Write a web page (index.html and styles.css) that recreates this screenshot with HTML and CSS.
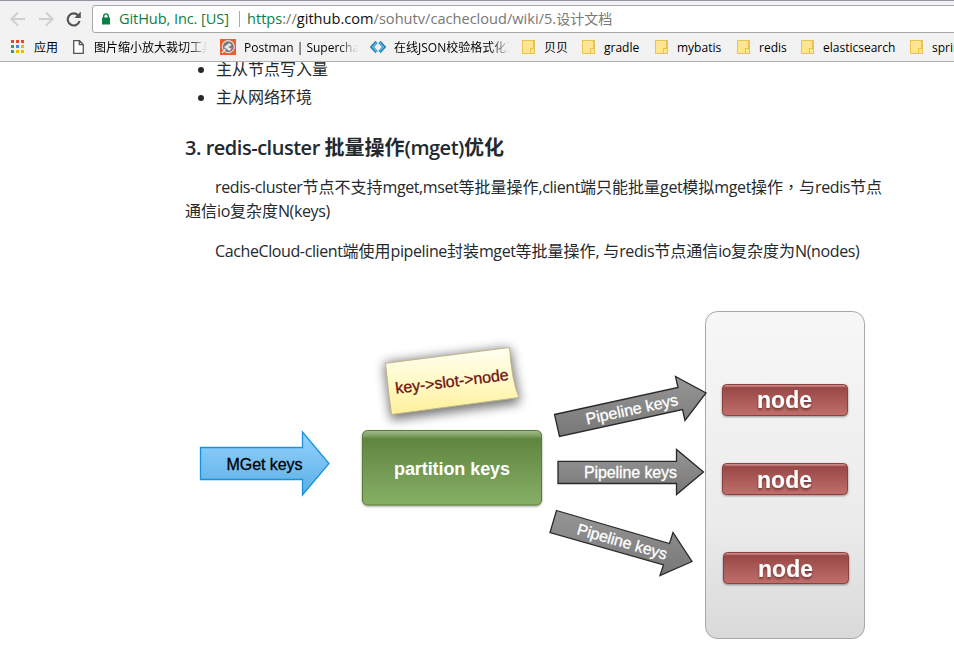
FILE: index.html
```html
<!DOCTYPE html>
<html lang="zh-CN">
<head>
<meta charset="utf-8">
<title>5.设计文档</title>
<link rel="stylesheet" href="styles.css">
</head>
<body>
<header class="chrome">
  <div class="toolbar">
    <svg class="nav" width="82" height="26" viewBox="0 0 82 26" fill="none">
      <g stroke="#cfcfcf" stroke-width="2"><path d="M25 13H12M18 6.5 11.5 13l6.500 6.500"/><path d="M39 13H52M46 6.500 52.500 13 46 19.500"/></g>
      <path d="M78.200 9.500A6 6 0 1 0 79.500 15" stroke="#555" stroke-width="2.200"/><path d="M80.800 5.500v6.500h-6.500z" fill="#555"/>
    </svg>
    <div class="address">
      <svg width="8" height="12" viewBox="0 0 8 12"><rect y="4.500" width="8" height="7" rx=".5" fill="#0b8043"/><path d="M1.700 5V3.200a2.300 2.300 0 0 1 4.600 0V5" fill="none" stroke="#0b8043" stroke-width="1.400"/></svg>
      <span class="owner">GitHub, Inc. [US]</span>
      <span class="url"><span class="scheme">https</span><span class="dim">://</span>github.com<span class="dim">/sohutv/cachecloud/wiki/5.</span><span class="dim cjk">设计文档</span></span>
    </div>
  </div>
  <nav class="bookmarks">
    <a><svg width="14" height="14" viewBox="0 0 14 14"><path fill="#ea4335" d="M0 0h3v3H0zM5 0h3v3H5zM10 0h3v3h-3z"/><path fill="#34a05f" d="M0 5h3v3H0zM0 10h3v3H0z"/><path fill="#4285f4" d="M5 5h3v3H5z"/><path fill="#fbb30c" d="M10 5h3v3h-3zM5 10h3v3H5zM10 10h3v3h-3z"/></svg><span>应用</span></a>
    <a class="page"><svg width="11" height="14" viewBox="0 0 11 14"><path d="M.7.700h5.800l3.800 3.800v8.800H.7zM6.300.700v4h4" fill="#fff" stroke="#555" stroke-width="1.300"/></svg><span class="fade">图片缩小放大裁切工具</span></a>
    <a class="postman"><svg width="16" height="16" viewBox="0 0 16 16"><path fill="#f15a29" d="M0 0h16v16H0z"/><circle cx="8.300" cy="7.700" r="6" fill="#777" stroke="#ddd" stroke-width="1.200"/><path d="M4 8 9.500 4l2 2.500L8 8l3.500 1.500-2 2.500z" fill="#e8e8e8"/><path d="m2 14 3.500-4" stroke="#eee" stroke-width="1.300"/></svg><span class="fade">Postman | Supercharge</span></a>
    <a class="json"><svg width="16" height="12" viewBox="0 0 16 12" fill="none" stroke-width="3.200"><g stroke="#1879b5"><path d="M6.500 1 2 6l4.500 5M9.500 1 14 6l-4.500 5"/></g><g stroke="#60b9e8" stroke-width="1.400"><path d="M6.500 1.500 2.500 6l4 4.500M9.500 1.500l4 4.500-4 4.500"/></g></svg><span class="fade">在线JSON校验格式化工具</span></a>
    <a class="folder"><i></i><span>贝贝</span></a>
    <a class="folder"><i></i><span>gradle</span></a>
    <a class="folder"><i></i><span>mybatis</span></a>
    <a class="folder"><i></i><span>redis</span></a>
    <a class="folder"><i></i><span>elasticsearch</span></a>
    <a class="folder"><i></i><span>spring</span></a>
  </nav>
</header>
<main>
  <article>
    <ul><li>主从节点写入量</li><li>主从网络环境</li></ul>
    <h3><b>3. redis-cluster </b>批量操作<b>(mget)</b>优化</h3>
    <p><b>redis-cluster</b>节点不支持<b>mget,mset</b>等批量操作<b>,client</b>端只能批量<b>get</b>模拟<b>mget</b>操作<span lang="zh-TW" class="comma">，</span>与<b>redis</b>节点<br>通信<b>io</b>复杂度<b>N(keys)</b></p>
    <p><b>CacheCloud-client</b>端使用<b>pipeline</b>封装<b>mget</b>等批量操作<b>, </b>与<b>redis</b>节点通信<b>io</b>复杂度为<b>N(nodes)</b></p>
    <svg class="diagram" width="700" height="370" viewBox="185 279 700 370">
      <defs>
        <linearGradient id="blue" x2="0" y2="1"><stop stop-color="#94d3ff"/><stop offset="1" stop-color="#5baee4"/></linearGradient>
        <linearGradient id="green" x2="0" y2="1"><stop stop-color="#a5bf91"/><stop offset=".09" stop-color="#729653"/><stop offset=".11" stop-color="#5f853f"/><stop offset="1" stop-color="#87b067"/></linearGradient>
        <linearGradient id="yellow" x2="0" y2="1"><stop stop-color="#fffff1"/><stop offset=".4" stop-color="#fffbd0"/><stop offset="1" stop-color="#fff09a"/></linearGradient>
        <linearGradient id="gray" x2="0" y2="1"><stop stop-color="#969696"/><stop offset="1" stop-color="#777"/></linearGradient>
        <linearGradient id="panel" x2="0" y2="1"><stop stop-color="#f7f7f7"/><stop offset=".65" stop-color="#ebebeb"/><stop offset="1" stop-color="#d9d9d9"/></linearGradient>
        <linearGradient id="red" x2="0" y2="1"><stop stop-color="#d49b99"/><stop offset=".08" stop-color="#b36967"/><stop offset=".1" stop-color="#984846"/><stop offset="1" stop-color="#c06f6c"/></linearGradient>
        <filter id="soft" x="-20%" y="-40%" width="140%" height="180%"><feGaussianBlur stdDeviation="5.500"/></filter>
        <filter id="drop" x="-5%" y="-15%" width="110%" height="140%"><feDropShadow dx="0" dy="1" stdDeviation=".8" flood-opacity=".4"/></filter>
        <filter id="textdrop" x="-10%" y="-20%" width="120%" height="160%"><feDropShadow dx="0" dy="2" stdDeviation=".8" flood-color="#501c1b" flood-opacity=".65"/></filter>
      </defs>
      <path d="M200.500 447.500H302.500V432L329 463.500 302.500 495V479.500H200.500z" fill="url(#blue)" stroke="#1593df" stroke-width="1.300"/>
      <text x="226.500" y="469.500" textLength="76" class="label dark">MGet keys</text>
      <path d="M384 363 510 348 520 403 391 420z" fill="#000" opacity=".55" filter="url(#soft)"/>
      <path d="M385.500 363.300 509.500 347.500Q512 382 519 397.500L391.500 414.500Q388 389 385.500 363.300z" fill="url(#yellow)" stroke="#bdb58b"/>
      <text transform="translate(396 393.800) rotate(-7)" textLength="114" class="label note">key-&gt;slot-&gt;node</text>
      <rect x="362.500" y="430.500" width="179" height="74.500" rx="5" fill="url(#green)" stroke="#577b39" filter="url(#drop)"/>
      <text x="394" y="475" textLength="116" class="partition">partition keys</text>
      <rect x="705.500" y="311.500" width="159" height="327" rx="12" fill="url(#panel)" stroke="#a7a7a7"/>
      <g fill="url(#gray)" stroke="#292929" stroke-width="1.300">
        <path d="M554.500 414.500 678 387.500 675.500 376.500 706 393 685 420.500 682.500 409.500 559.500 436.500z"/>
        <path d="M558 461.300H676.500V449.500L703.500 472 676.500 494.500V483.500H558z"/>
        <path d="M556.500 510.500 669.500 543.500 673 532.500 692 561.500 660 575.500 663.500 565 550 532.500z"/>
      </g>
      <g class="label white">
        <text transform="translate(587 424.500) rotate(-12)" textLength="94">Pipeline keys</text>
        <text x="584" y="478" textLength="93">Pipeline keys</text>
        <text transform="translate(576 534) rotate(16)" textLength="93">Pipeline keys</text>
      </g>
      <g fill="url(#red)" stroke="#8b403e" filter="url(#drop)">
        <rect x="722.500" y="384.500" width="125" height="31" rx="4"/>
        <rect x="722.500" y="463.500" width="125" height="31" rx="4"/>
        <rect x="723.500" y="552.500" width="125" height="31" rx="4"/>
      </g>
      <g class="node" filter="url(#textdrop)">
        <text x="757" y="408" textLength="55">node</text>
        <text x="757" y="487.500" textLength="55">node</text>
        <text x="758" y="576.500" textLength="55">node</text>
      </g>
    </svg>
  </article>
</main>
</body>
</html>
```
FILE: styles.css
```css
* { box-sizing: border-box; }
body {
  margin: 0;
  height: 663px;
  overflow: hidden;
  display: flex;
  flex-direction: column;
  background: #fff;
  color: #24292e;
  font-family: "Open Sans", "Noto Sans CJK SC", sans-serif;
}
.chrome {
  flex: none;
  height: 62px;
  background: #f2f2f2;
  border-top: 1px solid #92949f;
  border-bottom: 1px solid #b0b0b0;
  overflow: hidden;
}
.toolbar { display: flex; height: 32px; padding-top: 4px; }
.nav { flex: none; margin-top: 1px; }
.address {
  flex: 1;
  display: flex;
  align-items: center;
  height: 28px;
  margin: 0 -4px 0 10px;
  padding-left: 9px;
  background: #fff;
  border: 1px solid #a8a8a8;
  border-radius: 3px;
  font-size: 14.6px;
  line-height: 26px;
  white-space: nowrap;
}
.address svg { margin-bottom: 1px; }
.owner {
  width: 121px;
  height: 16px;
  line-height: 15px;
  margin-left: 9px;
  color: #0b8043;
  border-right: 1px solid #aaa;
  letter-spacing: -.1px;
}
.url { margin: 0 0 2px 7px; color: #111; }
.scheme { color: #0b8043; }
.dim { color: #777; }
.cjk { font-size: 14px; }
.bookmarks {
  display: grid;
  grid-template-columns: 62px 147px 150px 152px 60px 73px 82px 64px 109px 60px;
  padding-left: 11px;
  height: 28px;
  color: #000;
  font-size: 12px;
}
.bookmarks a { display: grid; grid-template-columns: 23px 1fr; align-items: center; white-space: nowrap; }
.bookmarks .page { grid-template-columns: 21px 113px; }
.bookmarks .postman { grid-template-columns: 24px 114px; }
.bookmarks .json { grid-template-columns: 24px 116px; }
.bookmarks .folder { grid-template-columns: 22px 1fr; }
.fade { overflow: hidden; -webkit-mask-image: linear-gradient(to right, #000 83%, transparent); mask-image: linear-gradient(to right, #000 83%, transparent); }
.folder i { width: 13px; height: 14px; background: #ffe592; border: 1px solid #e7c351; border-right-width: 2px; display: flex; align-items: flex-end; justify-content: flex-end; }
.folder i::after { content: ""; width: 3px; height: 4px; margin: 0 -2px -1px 0; border: 1px solid #e7c351; background: #ffe592; }
main { flex: 1; overflow: hidden; }
article { width: 700px; margin: -5px 0 0 185px; font-size: 16px; line-height: 24px; white-space: nowrap; }
ul { margin: 0 0 26px; padding-left: 31px; }
li + li { margin-top: 4px; }
h3 { margin: 0 0 14px; font-size: 20px; line-height: 25px; font-weight: 700; }
h3 b { font-weight: 600; letter-spacing: -.48px; }
p { margin: 0 0 16px; text-indent: 30px; }
p b { font-weight: 400; letter-spacing: -.39px; }
.comma { font-family: "Noto Sans CJK TC", sans-serif; }
.diagram { display: block; }
.diagram text { font-family: "Liberation Sans", sans-serif; }
.label { font-size: 16px; stroke-width: .3px; }
.dark { fill: #000; stroke: #000; }
.note { fill: #6c1010; stroke: #6c1010; }
.white { fill: #fff; stroke: #fff; }
.partition { font-size: 18px; font-weight: 700; fill: #fff; }
.node { font-size: 23px; font-weight: 700; fill: #fff; }
```
